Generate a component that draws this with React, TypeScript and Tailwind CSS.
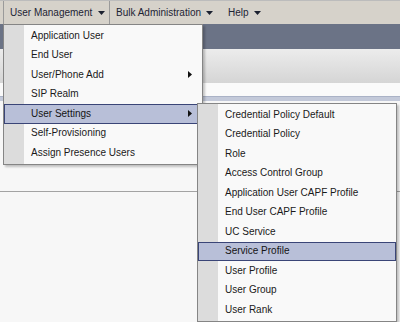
import { ReactNode } from 'react';

function DownArrow() {
  return (
    <svg width="7" height="4" viewBox="0 0 7 4" className="shrink-0">
      <path d="M0 0H7L3.5 4Z" fill="#1b2130" />
    </svg>
  );
}

function RightArrow() {
  return (
    <svg width="4" height="7" viewBox="0 0 4 7" className="shrink-0 ml-auto">
      <path d="M0 0L4 3.5L0 7Z" fill="#111" />
    </svg>
  );
}

type Item = { label: string; sub?: boolean; active?: boolean };

function MenuRow({ label, sub, active }: Item) {
  if (active) {
    return (
      <div className="h-[19.5px] flex items-center pl-[26px] pr-[9px] border border-[#3a4577] bg-[#b8bfd8] text-[#141414]">
        <span>{label}</span>
        {sub && <RightArrow />}
      </div>
    );
  }
  return (
    <div className="h-[19.5px] flex items-center pl-[27px] pr-[10px] text-[#1a1a1a]">
      <span>{label}</span>
      {sub && <RightArrow />}
    </div>
  );
}

function Menu({ items, className }: { items: Item[]; className: string }) {
  return (
    <div
      className={
        'absolute w-[200px] border border-[#858585] py-[1px] text-[10px] leading-none shadow-[2px_2px_2px_rgba(0,0,0,0.22)] bg-[linear-gradient(to_right,#dcdcdc_20px,#f9f9f9_20px)] ' +
        className
      }
    >
      {items.map((it) => (
        <MenuRow key={it.label} {...it} />
      ))}
    </div>
  );
}

function BarItem({ children, className }: { children: ReactNode; className: string }) {
  return <div className={'h-full flex items-center ' + className}>{children}</div>;
}

export default function App() {
  const userMgmt: Item[] = [
    { label: 'Application User' },
    { label: 'End User' },
    { label: 'User/Phone Add', sub: true },
    { label: 'SIP Realm' },
    { label: 'User Settings', sub: true, active: true },
    { label: 'Self-Provisioning' },
    { label: 'Assign Presence Users' },
  ];

  const userSettings: Item[] = [
    { label: 'Credential Policy Default' },
    { label: 'Credential Policy' },
    { label: 'Role' },
    { label: 'Access Control Group' },
    { label: 'Application User CAPF Profile' },
    { label: 'End User CAPF Profile' },
    { label: 'UC Service' },
    { label: 'Service Profile', active: true },
    { label: 'User Profile' },
    { label: 'User Group' },
    { label: 'User Rank' },
  ];

  return (
    <div className="relative w-[400px] h-[322px] overflow-hidden bg-[#f7f7f7] font-['Liberation_Sans',Arial,sans-serif]">
      {/* top menu bar */}
      <div className="h-[24px] flex border-t border-[#bcbcbc] bg-[#d6d2ca] text-[10px] leading-none text-[#1d2435]">
        <BarItem className="ml-[3px] w-[107px] border-x border-[#9a9a9a] pl-[6px] gap-[6px]">
          <span>User Management</span>
          <DownArrow />
        </BarItem>
        <BarItem className="w-[112px] pl-[6px] gap-[5px]">
          <span>Bulk Administration</span>
          <DownArrow />
        </BarItem>
        <BarItem className="pl-[6px] gap-[5px]">
          <span>Help</span>
          <DownArrow />
        </BarItem>
      </div>

      {/* page header layers */}
      <div className="h-[25px] bg-[#6b7386]" />
      <div className="h-[34px] bg-gradient-to-b from-[#ececec] to-[#d5d5d5]" />
      <div className="h-[13px] bg-[#fafafa]" />
      <div className="h-[5px] bg-[#c3c9d9] border-t border-[#aab2c6]" />
      <div className="h-[91px] border-b border-[#a3a3a3]" />

      {/* dropdowns */}
      <Menu items={userMgmt} className="left-[3px] top-[24px]" />
      <Menu items={userSettings} className="left-[197px] top-[103px]" />
    </div>
  );
}
